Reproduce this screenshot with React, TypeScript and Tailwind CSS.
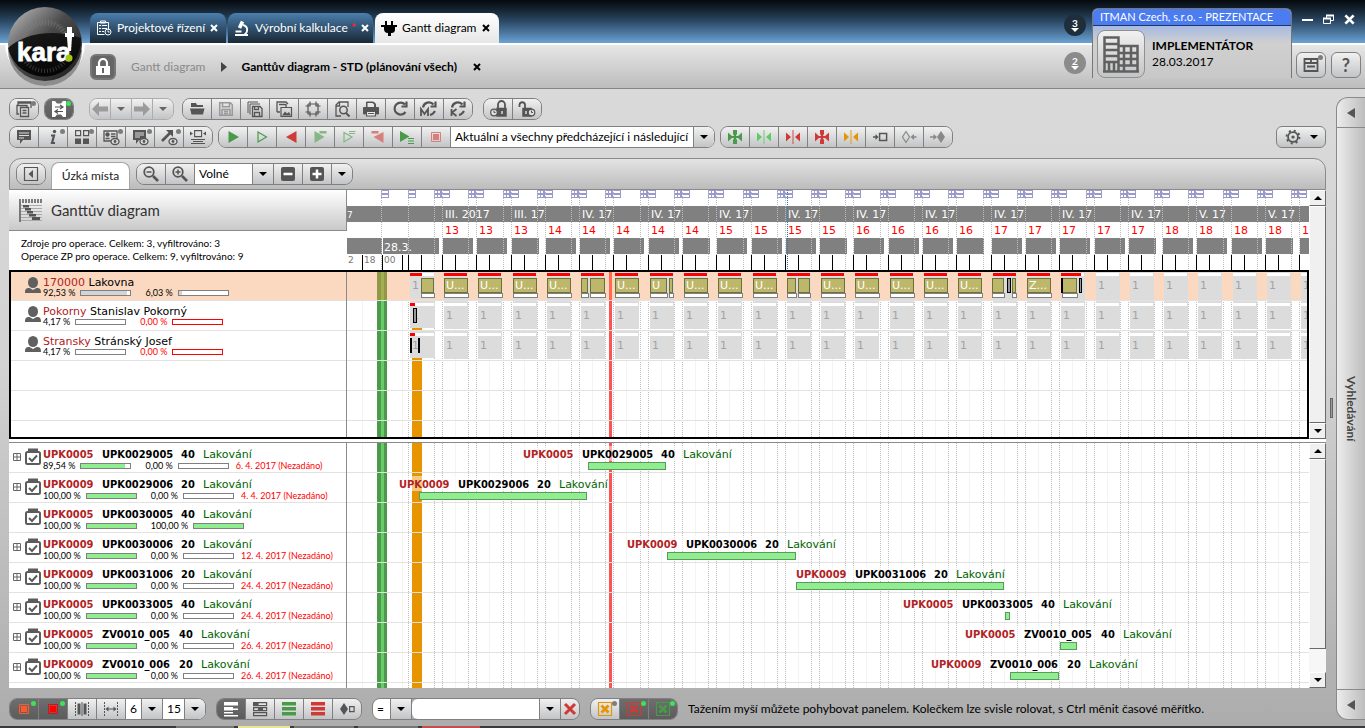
import React from 'react';

const DARK = '#555';
const GREEN = '#4b9a4b';
const RED = '#cf3a36';

/* ---------- icons ---------- */

interface IconProps {
  children: React.ReactNode;
  size?: number;
}

const Icon: React.FC<IconProps> = ({ children, size = 20 }) => (
  <svg width={size} height={size} viewBox="0 0 20 20" fill="none" stroke={DARK} strokeWidth="1.5" aria-hidden="true" className="shrink-0">
    {children}
  </svg>
);

const Caret = ({ color = '#000' }: { color?: string }) => (
  <svg width="8" height="4" viewBox="0 0 8 4" aria-hidden="true"><path d="M0 0h8L4 4z" fill={color} /></svg>
);

const Cross = ({ color = '#000', size = 8 }: { color?: string; size?: number }) => (
  <svg width={size} height={size} viewBox="0 0 8 8" aria-hidden="true"><path d="M1 1l6 6M7 1L1 7" stroke={color} strokeWidth="2" /></svg>
);

const eye = <><ellipse cx="14" cy="14.5" rx="4" ry="3" fill="#ddd" strokeWidth="1.3" /><circle cx="14" cy="14.5" r="1.4" fill={DARK} stroke="none" /></>;
const reload = <path d="M15 5.5A6 6 0 1 0 15.5 13M16.500 2.500v5h-5" strokeWidth="2.200" />;
const reloadHalf = <path d="M4 8.500A6 6 0 0 1 14.500 5.500M16.500 2.500v5h-5M11 16q3-.5 5-4" strokeWidth="2.200" />;
const clock = (x: number, y: number) => <><circle cx={x} cy={y} r="3.300" fill="#ddd" strokeWidth="1.200" /><path d={`M${x} ${y - 2}v2h1.500`} strokeWidth="1" /></>;

const icons = {
  windows: <Icon><path d="M4 6V3h13v6M4 4h13M3 8V6.500h10V8M3 7v8h2M6.500 8.500h8v9h-8zM8.500 11.500h4M8.500 14h4" strokeWidth="1.300" /></Icon>,
  fit: <Icon><path d="M3 2h3l2 2.500h4L14 2h3v16h-3l-2-2.500H8L6 18H3z" fill="#fff" stroke="none" /><path d="M6 8h7M11 6l3 2-3 2M14 12.500H7M9 10.500l-3 2 3 2" strokeWidth="1.200" /></Icon>,
  left: <Icon><path d="M2 10l7-7v4.500h9v5H9V17z" fill="#9b9b9b" stroke="none" /></Icon>,
  right: <Icon><path d="M18 10l-7-7v4.500H2v5h9V17z" fill="#9b9b9b" stroke="none" /></Icon>,
  folder: <Icon><path d="M4 8V4h5l1 2h6v2zM3 9.500h14.500l-1.500 6H4.500z" fill={DARK} stroke="none" /></Icon>,
  save: <Icon><path d="M3.700 3.700h10.600l2 2v10.600H3.700zM6.500 3.700v4h7v-4M6 16v-5.500h8V16M8 12.500h4M8 14.500h4" stroke="#999" /></Icon>,
  saveCopy: <Icon><path d="M3 14V3h10M5 15.500V5h10" strokeWidth="1" /><path d="M7.500 7.500h7.500l2 2v8H7.500zM9.500 7.500v3h4v-3M9.500 17v-3.500h5V17" strokeWidth="1.300" /></Icon>,
  saveImage: <Icon><path d="M3 13V3h9l2 2M5 5.500h7v3M3 13h3" strokeWidth="1.300" /><path d="M7 8.500h10.500v9H7z" strokeWidth="1.200" /><path d="M8 16.500l3-4 2 2 2-1.500 2 3.500z" fill={DARK} stroke="none" /></Icon>,
  chip: <Icon><path d="M7 5h6M7 15h6M5 7v6M15 7v6M7 2.500V7H2.500M13 2.500V7h4.500M7 17.500V13H2.500M13 17.500V13h4.500M5 5h2M13 5h2v2M5 5v2M5 13v2h2M15 13v2h-2" strokeWidth="1.200" /></Icon>,
  preview: <Icon><path d="M9 17H4V6l3-3h9v5M4 7h3.500V3" strokeWidth="1.300" /><circle cx="11.500" cy="11" r="3.700" /><path d="M14 14l3.500 3.500" strokeWidth="2" /></Icon>,
  print: <Icon><path d="M5.500 8V3h7l2 2v3M2.500 8.500h15V15h-2v-3h-11v3h-2z" fill={DARK} strokeWidth="1" /><path d="M6.500 4h5l1.500 1.500v2.500h-6.500z" fill="#e8e8e8" stroke="none" /><path d="M5.500 12.500h9v4.500h-9zM7 14.500h6" fill="#eee" strokeWidth="1.200" /></Icon>,
  reload: <Icon>{reload}</Icon>,
  reloadM: <Icon>{reloadHalf}<path d="M2 17v-7l3.500 5L9 10v7" strokeWidth="1.800" /></Icon>,
  reloadK: <Icon>{reloadHalf}<path d="M3.500 10v7M8.500 10l-4.500 3.500L8.500 17" strokeWidth="1.800" /></Icon>,
  lockClock: <Icon><path d="M9 9.500h9V17H9z" fill={DARK} /><path d="M10 9V5.500a3.500 3.500 0 0 1 7 0V9" strokeWidth="1.800" /><path d="M14 12v3" stroke="#ddd" />{clock(6, 13.5)}</Icon>,
  unlockClock: <Icon><path d="M6 9.500h8V17H6z" fill={DARK} /><path d="M8 9V5.500a2.800 2.800 0 0 0-5.500 0V8" strokeWidth="1.800" /><path d="M9 12v3" stroke="#ddd" />{clock(14.5, 13.5)}</Icon>,
  comment: <Icon><path d="M3 3h14v10H9l-3 4v-4H3z" fill={DARK} stroke="none" /><path d="M5 6h10M5 8.500h10M5 11h5" stroke="#ddd" strokeWidth="1.200" /></Icon>,
  info: <Icon><path d="M8 8.500h3l-2 7.500h3" strokeWidth="2.200" /><circle cx="11.500" cy="4.500" r="1.700" fill={DARK} stroke="none" /></Icon>,
  blocks: <Icon><path d="M3.600 3.600h5v5h-5zM11.600 3.600h5v5h-5z" strokeWidth="1.200" /><path d="M3 11.500h6V17H3zM11 11.500h6V17h-6z" fill={DARK} stroke="none" /></Icon>,
  cardEye: <Icon><path d="M3 4h13v10H3z" strokeWidth="1.300" /><circle cx="6.500" cy="7.500" r="1.500" fill={DARK} /><path d="M4.500 11.500h4M10 7h4.500M10 9.500h4.500" />{eye}</Icon>,
  commentEye: <Icon><path d="M3 3h13v10H9l-3 4v-4H3z" fill={DARK} stroke="none" /><path d="M5 6h9M5 8h9M5 10h5" stroke="#ddd" strokeWidth="1" />{eye}</Icon>,
  arrowEye: <Icon><path d="M3 14l8-8" strokeWidth="2.600" /><path d="M7 3h7v7z" fill={DARK} stroke="none" />{eye}</Icon>,
  align: <Icon><path d="M6.600 3.600h7v6h-7zM3 12.500h14M5 14.500h10M3 16.500h14" strokeWidth="1.100" /><path d="M2 4.500l3 2-3 2zM18 4.500l-3 2 3 2z" fill={DARK} stroke="none" /></Icon>,
  play: <Icon><path d="M5.500 4l10.500 6-10.500 6z" fill={GREEN} stroke="none" /></Icon>,
  playOutline: <Icon><path d="M6 5l8.500 5L6 15z" stroke={GREEN} strokeWidth="1.200" /></Icon>,
  back: <Icon><path d="M15.500 4L5 10l10.500 6z" fill={RED} stroke="none" /></Icon>,
  playSkip: <Icon><path d="M4.500 4l10 6-10 6zM9.500 4h7v2.500h-7z" fill="#86b686" stroke="none" /></Icon>,
  playSkipOutline: <Icon><path d="M5 5.500l8 4.500-8 5zM10 4.500h6.500M10 6.500h6" stroke="#86b686" strokeWidth="1.200" /></Icon>,
  backSkip: <Icon><path d="M15.500 5l-10 5 10 6zM3.500 4h7v2.500h-7z" fill="#d87f7d" stroke="none" /></Icon>,
  playList: <Icon><path d="M3 4l9.500 5.500L3 15z" fill={GREEN} stroke="none" /><path d="M11 11.500h6M11 14h6M11 16.500h6" stroke={GREEN} strokeWidth="1.200" /></Icon>,
  stop: <Icon><path d="M5.500 5.500h9v9h-9z" stroke="#d87f7d" strokeWidth="1" /><path d="M7 7h6v6H7z" fill="#d87f7d" stroke="none" /></Icon>,
  toBox: <Icon><path d="M3 10h4M9.600 6.600h7v7h-7z" /><path d="M5.500 7l3 3-3 3z" fill={DARK} stroke="none" /></Icon>,
  diamondOut: <Icon><path d="M7 4.500l3.500 5.500L7 15.500 3.500 10z" stroke="#888" strokeWidth="1.200" /><path d="M13 10h4.500" stroke="#888" /><path d="M15 7l-3.500 3 3.500 3z" fill="#888" stroke="none" /></Icon>,
  diamondIn: <Icon><path d="M13 4l4 6-4 6-4-6z" fill="#888" stroke="none" /><path d="M2 10h5" stroke="#888" /><path d="M5.500 7L9 10l-3.500 3z" fill="#888" stroke="none" /></Icon>,
  zoomOut: <Icon><circle cx="8" cy="8" r="4.800" strokeWidth="1.800" /><path d="M5.500 8h5" /><path d="M12 12l5 5" strokeWidth="2.600" /></Icon>,
  zoomIn: <Icon><circle cx="8" cy="8" r="4.800" strokeWidth="1.800" /><path d="M5.500 8h5M8 5.500v5" /><path d="M12 12l5 5" strokeWidth="2.600" /></Icon>,
  minus: <Icon><rect x="3" y="3" width="14" height="14" rx="2" fill={DARK} stroke="none" /><path d="M5.500 10h9" stroke="#fff" strokeWidth="2.500" /></Icon>,
  plus: <Icon><rect x="3" y="3" width="14" height="14" rx="2" fill={DARK} stroke="none" /><path d="M5.500 10h9M10 5.500v9" stroke="#fff" strokeWidth="2.500" /></Icon>,
  collapse: <Icon><path d="M3.500 3.500h13v13h-13z" strokeWidth="1.200" /><path d="M12 6v8l-4.500-4z" fill={DARK} stroke="none" /></Icon>,
  columns: <Icon><path d="M3.500 3v14M16.500 3v14" strokeDasharray="2 1" strokeWidth="1" /><path d="M5.500 4.500h3v11h-3zM11.500 4.500h3v11h-3z" fill={DARK} stroke="none" /><path d="M10 3v14" strokeWidth="1" /></Icon>,
  span: <Icon><path d="M3.500 3v14M16.500 3v14" strokeDasharray="2 1" strokeWidth="1" /><path d="M6 10h8" strokeWidth="1.200" /><path d="M4.500 10l3-2.500v5zM15.500 10l-3-2.500v5z" fill={DARK} stroke="none" /></Icon>,
  rowsWhite: <Icon><path d="M3 3h14v3.500H3zM3 8h9v3.500H3zM12 9.500h5V11h-5zM3 13h9v1.500H3zM3 16h14v1.500H3z" fill="#fff" stroke="none" /></Icon>,
  rowsDark: <Icon><path d="M3.600 3.600h13v3h-13zM3.600 8.600h13v3h-13zM3.600 13.600h13v3h-13z" strokeWidth="1.200" /><path d="M3.600 3.600h5v3h-5zM8 8.600h5v3H8z" fill={DARK} stroke="none" /></Icon>,
  rowsGreen: <Icon><path d="M3 3h14v3.500H3zM3 8h14v3.500H3zM3 13h14v3.500H3z" fill={GREEN} stroke="none" /></Icon>,
  rowsRed: <Icon><path d="M3 3h14v3.500H3zM3 8h14v3.500H3zM3 13h14v3.500H3z" fill={RED} stroke="none" /></Icon>,
  shapes: <Icon><path d="M7 4l4 6-4 6-4-6z" fill={DARK} stroke="none" /><path d="M12.600 7.600h4.500v5h-4.500z" strokeWidth="1.200" /></Icon>,
  cross: <Icon><path d="M5 5l10 10M15 5L5 15" stroke={RED} strokeWidth="3" /></Icon>,
};

const framed = (color: string) => (
  <Icon><path d="M5.500 5.500h9v9h-9z" stroke={color} strokeWidth="1" /><path d="M7 7h6v6H7z" fill={color} stroke="none" /></Icon>
);

const crossed = (color: string) => (
  <Icon><path d="M3.500 3.500h13v13h-13z" stroke={color} strokeWidth="1.200" /><path d="M6.500 6.500l7 7M13.500 6.500l-7 7" stroke={color} strokeWidth="2.800" /></Icon>
);

const meet = (color: string, thick = false) => (
  <Icon>
    <path d="M3 5.500L8 10l-5 4.500zM17 5.500L12 10l5 4.500z" fill={color} stroke="none" />
    {thick
      ? <path d="M8 3h4v4l-1 1.500v3l1 1.500v4H8v-4l1-1.500v-3L8 7zM7 9h6v2H7z" fill={color} stroke="none" />
      : <path d="M10 3v14" stroke={color} strokeOpacity="0.600" strokeWidth="1.500" />}
  </Icon>
);

/* ---------- controls ---------- */

const face = 'bg-linear-to-b from-[#f1f1f1] to-[#c3c4c6]';

const Group: React.FC<{ children: React.ReactNode; faded?: boolean }> = ({ children, faded }) => (
  <div className={`flex h-[22px] shrink-0 divide-x overflow-hidden rounded-lg border ${faded ? 'divide-[#adadad] border-[#adadad]' : 'divide-[#808080] border-[#808080]'}`}>
    {children}
  </div>
);

interface BtnProps {
  label: string;
  children: React.ReactNode;
  dot?: 'gray' | 'green';
  active?: boolean;
  narrow?: boolean;
}

const Btn: React.FC<BtnProps> = ({ label, children, dot, active, narrow }) => (
  <button
    type="button"
    aria-label={label}
    title={label}
    className={`relative flex h-full shrink-0 items-center justify-center overflow-hidden ${narrow ? 'w-[21px] last:w-5' : 'w-[29px] last:w-[28px]'} ${active ? 'bg-linear-to-b from-[#6e6e6e] to-[#5c5c5c]' : face}`}
  >
    {children}
    {dot && <span className={`absolute top-0.5 right-0.5 size-[5px] rounded-full ${dot === 'green' ? 'bg-[#3be35b]' : 'bg-[#7d7d7d]'}`}></span>}
  </button>
);

interface ComboProps {
  label: string;
  value: string;
  className: string;
}

const Combo: React.FC<ComboProps> = ({ label, value, className }) => (
  <div className={`relative h-full shrink-0 bg-white ${className}`}>
    <select aria-label={label} className="block h-5 w-full appearance-none bg-white pl-1 text-[12px] leading-5 outline-none">
      <option>{value}</option>
    </select>
    <span className={`pointer-events-none absolute inset-y-0 right-0 flex w-[21px] items-center justify-center border-l border-[#808080] ${face}`}>
      <Caret />
    </span>
  </div>
);

/* ---------- header ---------- */

const Logo = () => (
  <svg width="86" height="88" viewBox="0 0 86 88" className="absolute top-0 left-0 z-10" aria-label="karat">
    <defs>
      <linearGradient id="ball" x1="0" y1="0" x2="1" y2="1">
        <stop offset="0" stopColor="#c4c4c4" /><stop offset="0.450" stopColor="#4a4a4a" /><stop offset="1" stopColor="#1b1b1b" />
      </linearGradient>
      <linearGradient id="shade" x1="0" y1="0" x2="0" y2="1">
        <stop offset="0" stopColor="#111" /><stop offset="1" stopColor="#000" />
      </linearGradient>
    </defs>
    <path d="M5 43a40 40 0 0 0 80 0z" fill="#fff" />
    <path d="M8 50a37 36 0 0 0 74 0z" fill="#8d8d8d" />
    <circle cx="45" cy="44" r="37" fill="url(#ball)" />
    <circle cx="45" cy="46" r="23" fill="none" stroke="#888" strokeWidth="5" strokeDasharray="1 2" opacity="0.500" />
    <path d="M8 48c15-14 45-20 73-10a37 37 0 0 1-73 10z" fill="url(#shade)" opacity="0.900" />
    <circle cx="45" cy="46" r="25" fill="none" stroke="#777" strokeWidth="4" strokeDasharray="1 2" opacity="0.400" />
    <text x="17" y="61" fontSize="26" fontWeight="700" fontFamily="'Liberation Sans Narrow', 'Liberation Sans', sans-serif" fill="#fff" stroke="#fff" strokeWidth="0.800">kara</text>
    <path d="M67 27h5v6h2v4h-2l-1 14h-3l-1-14h-2v-4h2z" fill="#fff" />
    <circle cx="69" cy="58" r="3.500" fill="#a4c614" />
  </svg>
);

const tabIcons = [
  <svg key="p" width="16" height="16" viewBox="0 0 16 16" fill="none" stroke="#fff" aria-hidden="true"><path d="M1.500 2.500h11v7M1.500 2.500v12h7M4.500 1h5v2h-5zM3 5.500h2M6 5.500h5M3 8.500h2M6 8.500h5M3 11.500h2M6 11.500h2" /><circle cx="12" cy="12" r="3" /><path d="M12 10.500V12h1.500" /></svg>,
  <svg key="v" width="16" height="16" viewBox="0 0 16 16" fill="none" stroke="#fff" strokeWidth="1.800" className="shrink-0" aria-hidden="true"><path d="M1 15h13M1.500 11.500h6" /><path d="M8.500 1.500L5.500 8" strokeWidth="3.600" /><path d="M9 5c5 1 5.500 7 1.500 9.500" /></svg>,
  <svg key="g" width="16" height="16" viewBox="0 0 16 16" className="shrink-0" aria-hidden="true"><path d="M4 1h2v4h4V1h2v4h4v2h-2v2c0 3-1 4-4 4v3H7v-3C4 13 3 11 3 9V7H0V5h4z" fill="#000" /></svg>,
];

const tabs = [
  { title: 'Projektové řízení', width: 'w-[136px]', dirty: false, active: false },
  { title: 'Výrobní kalkulace', width: 'w-[145px]', dirty: true, active: false },
  { title: 'Gantt diagram', width: 'w-[124px]', dirty: false, active: true },
];

const Header = () => (
  <header className="relative shrink-0">
    <Logo />
    <div className="flex h-[43px] items-end gap-0.5 bg-linear-to-b from-[#05090d] via-[#2c4a66] to-[#6ba3d6] pl-[90px]">
      {tabs.map((tab, i) => (
        <div
          key={tab.title}
          className={`flex h-[30px] items-center gap-[5px] rounded-t-lg px-1.5 text-[12px] ${tab.width} ${tab.active ? 'bg-linear-to-b from-white to-[#e6e6e6] text-black' : 'bg-linear-to-b from-[#4a7fae] to-[#1a2936] text-white'}`}
        >
          {tabIcons[i]}
          <a href="#" className="whitespace-nowrap">{tab.title}</a>
          {tab.dirty && <span className="-ml-0.5 font-bold text-[#ff2020]">*</span>}
          <button type="button" aria-label={`Zavřít ${tab.title}`}><Cross color={tab.active ? '#000' : '#fff'} /></button>
        </div>
      ))}
    </div>
    <div className="flex h-[46px] items-center border-t-2 border-b border-t-white border-b-[#858585] bg-linear-to-b from-[#e6e6e6] to-[#bdbdbd] pl-[90px] text-[12px]">
      <button type="button" aria-label="Zámek" className="flex size-[26px] items-center justify-center rounded-md border-2 border-[#777] bg-[#666]">
        <svg width="16" height="18" viewBox="0 0 16 18" aria-hidden="true"><path d="M4 8V5a4 4 0 0 1 8 0v3" fill="none" stroke="#fff" strokeWidth="2.200" /><path d="M1 8h14v9H1z" fill="#fff" /><path d="M7 10h2v5H7z" fill="#666" /></svg>
      </button>
      <a href="#" className="ml-[15px] text-[#8a8a8a]">Gantt diagram</a>
      <svg width="6" height="10" viewBox="0 0 6 10" className="mx-[15px]" aria-hidden="true"><path d="M0 0l6 5-6 5z" fill="#444" /></svg>
      <span className="font-bold text-black">Ganttův diagram - STD (plánování všech)</span>
      <button type="button" aria-label="Zavřít diagram" className="ml-4"><Cross /></button>
    </div>

    <div className="absolute top-2 right-1 flex gap-1">
      <div className="mt-1.5 mr-0.5 flex flex-col gap-4">
        <button type="button" className="flex size-[22px] flex-col items-center justify-center rounded-full bg-[#1e2e3d] text-[10px] leading-[10px] font-bold text-white">3<Caret color="#fff" /></button>
        <button type="button" className="flex size-[22px] flex-col items-center justify-center rounded-full bg-[#8b8b8b] text-[10px] leading-[10px] font-bold text-white">2<Caret color="#fff" /></button>
      </div>
      <div className="w-[200px] rounded-t-md border border-b-0 border-[#777] bg-linear-to-b from-[#7ea2ee] via-[#d0d0d0] to-[#c8c8c8]">
        <div className="h-[17px] overflow-hidden rounded-t-md border-b border-[#1e3566] bg-[#4b7cf0] pl-[7px] text-[11px] leading-4 whitespace-nowrap text-white">ITMAN Czech, s.r.o. - PREZENTACE</div>
        <div className="flex items-center gap-[7px] px-1 pt-1">
          <button type="button" aria-label="Firma" className={`flex size-12 items-center justify-center rounded-lg border border-[#909090] ${face}`}>
            <svg width="38" height="38" viewBox="0 0 38 38" fill="none" stroke="#606060" aria-hidden="true">
              <path d="M2.500 36V2.500h14V36M2.500 9h14M2.500 15h14M2.500 21h14M2.500 27h14M16 11h19.500V36M1 36.500h36M7 36v-9M12 36v-9M22 11v25M29 11v20M16 18h19M16 24h19M16 30.500h19" strokeWidth="2.500" />
            </svg>
          </button>
          <p className="text-[12px] leading-4 text-black">
            <strong>IMPLEMENTÁTOR</strong><br />28.03.2017
          </p>
        </div>
      </div>
      <div className="flex w-[65px] flex-col justify-between">
        <div className="flex items-center justify-between px-1.5 pt-1.5">
          <button type="button" aria-label="Minimalizovat"><svg width="11" height="11" viewBox="0 0 11 11"><path d="M0 5h11v2H0z" fill="#fff" /></svg></button>
          <button type="button" aria-label="Obnovit"><svg width="11" height="11" viewBox="0 0 11 11" fill="none" stroke="#fff"><path d="M3.500 4V1.500h7v5H8M.5 4.500h7v5h-7z" /><path d="M3 1.500h8M0 4.500h8" strokeWidth="2" /></svg></button>
          <button type="button" aria-label="Zavřít"><Cross color="#fff" size={11} /></button>
        </div>
        <div className="flex gap-[5px]">
          <button type="button" aria-label="Okna" className={`relative flex h-[26px] w-[30px] items-center justify-center rounded-md border border-[#808080] ${face}`}>
            <Icon><path d="M3.500 4h13v12h-13zM3 8h14M10 4v4M6 11.500h8" strokeWidth="1.800" /></Icon>
            <span className="absolute top-0.5 right-0.5 size-[5px] rounded-full bg-[#7d7d7d]"></span>
          </button>
          <button type="button" aria-label="Nápověda" className={`h-[26px] w-[30px] rounded-md border border-[#808080] text-[18px] leading-6 font-bold text-[#555] ${face}`}>?</button>
        </div>
      </div>
    </div>
  </header>
);

/* ---------- toolbars ---------- */

const Toolbars = () => (
  <div className="flex flex-col gap-1.5 pt-[9px]">
    <div className="flex gap-[10px]">
      <div className="mr-[5px] flex gap-[5px]">
        <Group><Btn label="Okna" dot="gray">{icons.windows}</Btn></Group>
        <Group><Btn label="Přizpůsobit" dot="green" active>{icons.fit}</Btn></Group>
      </div>
      <Group faded>
        <Btn label="Zpět" narrow>{icons.left}</Btn>
        <Btn label="Historie zpět" narrow><Caret color="#666" /></Btn>
        <Btn label="Vpřed" narrow>{icons.right}</Btn>
        <Btn label="Historie vpřed" narrow><Caret color="#666" /></Btn>
      </Group>
      <div className="-ml-0.5 flex gap-[10px]">
        <Group>
          <Btn label="Otevřít">{icons.folder}</Btn>
          <Btn label="Uložit">{icons.save}</Btn>
          <Btn label="Uložit kopii">{icons.saveCopy}</Btn>
          <Btn label="Uložit obrázek">{icons.saveImage}</Btn>
          <Btn label="Výběr">{icons.chip}</Btn>
          <Btn label="Náhled">{icons.preview}</Btn>
          <Btn label="Tisk">{icons.print}</Btn>
          <Btn label="Obnovit">{icons.reload}</Btn>
          <Btn label="Obnovit M">{icons.reloadM}</Btn>
          <Btn label="Obnovit K">{icons.reloadK}</Btn>
        </Group>
        <Group>
          <Btn label="Zamknout">{icons.lockClock}</Btn>
          <Btn label="Odemknout">{icons.unlockClock}</Btn>
        </Group>
      </div>
    </div>
    <div className="flex gap-[5px]">
      <Group>
        <Btn label="Komentář">{icons.comment}</Btn>
        <Btn label="Informace" dot="gray">{icons.info}</Btn>
        <Btn label="Bloky" dot="gray">{icons.blocks}</Btn>
        <Btn label="Karta" dot="gray">{icons.cardEye}</Btn>
        <Btn label="Poznámky" dot="gray">{icons.commentEye}</Btn>
        <Btn label="Vazby" dot="gray">{icons.arrowEye}</Btn>
        <Btn label="Zarovnat">{icons.align}</Btn>
      </Group>
      <Group>
        <Btn label="Spustit">{icons.play}</Btn>
        <Btn label="Simulovat">{icons.playOutline}</Btn>
        <Btn label="Zpětně">{icons.back}</Btn>
        <Btn label="Spustit od">{icons.playSkip}</Btn>
        <Btn label="Simulovat od">{icons.playSkipOutline}</Btn>
        <Btn label="Zpětně od">{icons.backSkip}</Btn>
        <Btn label="Spustit seznam">{icons.playList}</Btn>
        <Btn label="Zastavit">{icons.stop}</Btn>
        <Combo label="Rozsah" value="Aktuální a všechny předcházející i následující" className="w-[263px]" />
      </Group>
      <Group>
        <Btn label="Posun zelený">{meet(GREEN, true)}</Btn>
        <Btn label="Posun světlý">{meet('#5fcb62')}</Btn>
        <Btn label="Posun červený">{meet(RED)}</Btn>
        <Btn label="Posun pevný">{meet(RED, true)}</Btn>
        <Btn label="Posun oranžový">{meet('#e69500')}</Btn>
        <Btn label="Do bloku">{icons.toBox}</Btn>
        <Btn label="Z milníku">{icons.diamondOut}</Btn>
        <Btn label="Do milníku">{icons.diamondIn}</Btn>
      </Group>
      <button type="button" aria-label="Nastavení" className={`ml-auto flex h-[22px] w-[50px] items-center justify-center gap-2 rounded-md border border-[#808080] ${face}`}>
        <Icon size={18}>
          <circle cx="10" cy="10" r="5.500" strokeWidth="2" /><circle cx="10" cy="10" r="1.800" fill={DARK} stroke="none" />
          <circle cx="10" cy="10" r="7.200" strokeWidth="2" strokeDasharray="2.300 3.350" />
        </Icon>
        <Caret />
      </button>
    </div>
  </div>
);

/* ---------- timeline ---------- */

const DAYS = Array.from({ length: 26 }, (_, k) => k);
const dayX = (k: number) => Math.floor(95.45 + 34.295 * k);

// last working day of each calendar week is drawn shorter
const shortDays = [2, 7, 11, 15, 20, 24];
const weekOf = (k: number) => (k < 3 ? 13 : k < 8 ? 14 : k < 12 ? 15 : k < 16 ? 16 : k < 21 ? 17 : k < 25 ? 18 : 1);
const monthOf = (k: number) => (k === 0 ? 'III. 2017' : k === 2 ? 'III. 17' : k < 22 ? 'IV. 17' : 'V. 17');

const VERDANA = "'DejaVu Sans', sans-serif";

interface BoxProps {
  x: number;
  y: number;
  w: number;
  h: number;
  stroke: string;
  fill: string;
}

const Box: React.FC<BoxProps> = ({ x, y, w, h, stroke, fill }) => (
  <>
    <rect x={x} y={y} width={w} height={h} fill={stroke} />
    <rect x={x + 1} y={y + 1} width={w - 2} height={h - 2} fill={fill} />
  </>
);

const Dotted = ({ x, fill = 'url(#dots)' }: { x: number; fill?: string }) => (
  <rect x={x} y="0" width="1" height="100%" fill={fill} />
);

const DotPatterns = () => (
  <defs>
    <pattern id="dots" width="1" height="2" patternUnits="userSpaceOnUse"><rect width="1" height="1" fill="#bdbdbd" /></pattern>
    <pattern id="dotsBlue" width="1" height="2" patternUnits="userSpaceOnUse"><rect width="1" height="1" fill="#2a7ab8" /></pattern>
  </defs>
);

const TimeScale = () => (
  <svg width="100%" height="80" shapeRendering="crispEdges" fontFamily={VERDANA} className="block">
    <DotPatterns />
    <rect x="0" y="16" width="100%" height="16" fill="#808080" />
    <rect x="0" y="48" width="92" height="16" fill="#808080" />
    <rect x="35" y="48" width="1" height="16" fill="#fff" />
    {[34, 61].map((x) => (
      <g key={x}>
        <Box x={x} y={0} w={8} h={8} stroke="#9999cc" fill="#fff" />
        <rect x={x} y="3" width="8" height="2" fill="#9999cc" />
        <Dotted x={x} />
      </g>
    ))}
    {[15, 35, 55, 61, 74].map((x) => <rect key={x} x={x} y="65" width="1" height="15" fill="#000" />)}
    {DAYS.map((k) => {
      const x = dayX(k);
      return (
        <g key={k}>
          <rect x={x + 1} y="48" width={shortDays.includes(k) ? 27 : 30} height="16" fill="#808080" />
          <Box x={x - 8} y={0} w={16} h={8} stroke="#9999cc" fill="#fff" />
          <rect x={x - 8} y="3" width="16" height="2" fill="#9999cc" />
          <rect x={x - 5} y="0" width="1" height="8" fill="#9999cc" />
          <rect x={x - 2} y="0" width="2" height="8" fill="#9999cc" />
          <Dotted x={x - 8} />
          <Dotted x={x} />
          <rect x={x} y="65" width="1" height="15" fill="#000" />
          <rect x={x + 13} y="65" width="1" height="15" fill="#000" />
          <text x={x + 3} y="44" fontSize="11" fill="#f00">{weekOf(k)}</text>
          {k % 2 === 0 && <text x={x + 3} y="28" fontSize="11" fill="#fff">{monthOf(k)}</text>}
        </g>
      );
    })}
    <Dotted x={440} fill="url(#dotsBlue)" />
    <text x="0" y="28" fontSize="9" fill="#fff">7</text>
    <text x="37" y="61" fontSize="11" fill="#fff">28.3.</text>
    <g fontSize="9" fill="#777">
      <text x="1" y="73">2</text>
      <text x="17" y="73">18</text>
      <text x="37" y="73">00</text>
    </g>
  </svg>
);

const Grid = ({ rows, first }: { rows: number; first: number }) => (
  <>
    <DotPatterns />
    {[15, 55, 74].map((x) => <rect key={x} x={x} y="0" width="1" height="100%" fill="#f3f3f3" />)}
    {DAYS.map((k) => <rect key={k} x={dayX(k) + 13} y="0" width="1" height="100%" fill="#f3f3f3" />)}
    <rect x="30" y="0" width="10" height="100%" fill="#4e984e" />
    <rect x="34" y="0" width="3" height="100%" fill="#66cc66" />
    <rect x="65" y="0" width="10" height="100%" fill="#e69500" />
    <Dotted x={61} />
    {DAYS.map((k) => (
      <g key={k}><Dotted x={dayX(k) - 8} /><Dotted x={dayX(k)} /></g>
    ))}
    <rect x="262" y="0" width="3" height="100%" fill="#ff5252" />
    {Array.from({ length: rows }, (_, i) => (
      <rect key={i} x="0" y={first + i * 30} width="100%" height="1" fill="#e2e2e2" />
    ))}
  </>
);

// occupied blocks of the paint shop, offset and width inside the day
const blocks: Record<number, { dx: number; w: number; text?: string }[]> = {
  4: [{ dx: 2, w: 7 }, { dx: 11, w: 15 }],
  6: [{ dx: 2, w: 17, text: 'U' }, { dx: 21, w: 4 }],
  10: [{ dx: 2, w: 9 }, { dx: 13, w: 12 }],
  16: [{ dx: 1, w: 12 }, { dx: 21, w: 4 }],
  17: [{ dx: 2, w: 24, text: 'Z...' }],
  18: [{ dx: 3, w: 15 }],
};

const rowTops = [0, 29, 59];

const ResourceChart = () => (
  <svg width="100%" height="100%" shapeRendering="crispEdges" fontFamily={VERDANA} fontSize="11" className="block">
    <Grid rows={5} first={28} />
    <rect x="0" y="0" width="100%" height="28" fill="#fbd9c0" />
    <rect x="30" y="0" width="10" height="28" fill="#929748" />
    <rect x="34" y="0" width="3" height="28" fill="#a2b052" />
    <rect x="262" y="0" width="3" height="28" fill="#ff6a50" />
    {rowTops.map((y, row) => (
      <g key={y}>
        <rect x="63" y={y} width="25" height="27" fill="#dcdcdc" />
        <rect x="63" y={row === 0 ? 1 : y + 2} width="24" height="3" fill="#fff" />
        <rect x="63" y={row === 0 ? 1 : y + 2} width={row === 0 ? 12 : 5} height="3" fill="#f00" />
        <text x="65" y={row === 0 ? 17 : y + 18} fill="#a3a3a3">1</text>
      </g>
    ))}
    <Box x={74} y={6} w={13} h={15} stroke="#6f6f38" fill="#bdb76b" />
    <Box x={74} y={21} w={14} h={5} stroke="#808080" fill="#fff" />
    <Box x={66} y={36} w={4} h={15} stroke="#000" fill="#999" />
    <rect x="63" y="66" width="2" height="15" fill="#000" />
    <rect x="71" y="66" width="2" height="15" fill="#000" />
    {DAYS.map((k) => {
      const x = dayX(k);
      return (
        <g key={k}>
          {rowTops.map((y, row) => (
            <g key={y}>
              <rect x={x + 2} y={y} width="24" height="28" fill="#dcdcdc" />
              <rect x={x + 2} y={row === 0 ? 1 : y + 2} width="23" height="3" fill="#fff" />
              {(row > 0 || k > 18) && <text x={x + 4} y={row === 0 ? 17 : y + 18} fill="#a3a3a3">1</text>}
            </g>
          ))}
          {k < 19 && <rect x={x + 2} y="1" width={k === 18 ? 20 : 23} height="3" fill="#f00" />}
          {k < 19 && (blocks[k] ?? [{ dx: 2, w: 24, text: 'U...' }]).map((b) => (
            <g key={b.dx}>
              <Box x={x + b.dx} y={6} w={b.w} h={15} stroke="#6f6f38" fill="#bdb76b" />
              <Box x={x + b.dx} y={21} w={b.w + 1} h={5} stroke="#808080" fill="#fff" />
              {b.text && <text x={x + b.dx + 2} y="17" fill="#fff">{b.text}</text>}
            </g>
          ))}
        </g>
      );
    })}
    <Box x={dayX(16) + 16} y={6} w={4} h={15} stroke="#000" fill="#999" />
    <rect x={dayX(18) + 2} y="6" width="2" height="15" fill="#000" />
    <Box x={dayX(18) + 20} y={6} w={3} h={15} stroke="#000" fill="#999" />
  </svg>
);

interface Operation {
  code: string;
  order: string;
  num: string;
  done: string;
  fill: number;
  date?: string;
  label?: number;
  bar?: [number, number];
}

const operations: Operation[] = [
  { code: 'UPK0005', order: 'UPK0029005', num: '40', done: '89,54 %', fill: 89, date: '6. 4. 2017 (Nezadáno)', label: 176, bar: [241, 78] },
  { code: 'UPK0009', order: 'UPK0029006', num: '20', done: '100,00 %', fill: 100, date: '4. 4. 2017 (Nezadáno)', label: 52, bar: [72, 168] },
  { code: 'UPK0005', order: 'UPK0030005', num: '40', done: '100,00 %', fill: 100 },
  { code: 'UPK0009', order: 'UPK0030006', num: '20', done: '100,00 %', fill: 100, date: '12. 4. 2017 (Nezadáno)', label: 280, bar: [320, 129] },
  { code: 'UPK0009', order: 'UPK0031006', num: '20', done: '100,00 %', fill: 100, date: '24. 4. 2017 (Nezadáno)', label: 449, bar: [449, 208] },
  { code: 'UPK0005', order: 'UPK0033005', num: '40', done: '100,00 %', fill: 100, date: '24. 4. 2017 (Nezadáno)', label: 556, bar: [658, 5] },
  { code: 'UPK0005', order: 'ZV0010_005', num: '40', done: '100,00 %', fill: 100, date: '26. 4. 2017 (Nezadáno)', label: 618, bar: [713, 17] },
  { code: 'UPK0009', order: 'ZV0010_006', num: '20', done: '100,00 %', fill: 100, date: '26. 4. 2017 (Nezadáno)', label: 584, bar: [663, 49] },
];

const OperationChart = () => (
  <svg width="100%" height="100%" shapeRendering="crispEdges" className="block">
    <Grid rows={8} first={29} />
    {operations.map((op, i) => {
      if (op.label === undefined || !op.bar) return null;
      const y = i * 30;
      const numX = op.label + (op.order.startsWith('ZV') ? 136 : 138);
      return (
        <g key={op.order}>
          <rect x={op.label} y={y + 3} width="208" height="15" fill="#fff" fillOpacity="0.500" />
          <g fontSize="11" fontWeight="700" fontFamily="'DejaVu Sans Condensed', 'DejaVu Sans', sans-serif">
            <text x={op.label} y={y + 15} fill="#b22222">{op.code}</text>
            <text x={op.label + 59} y={y + 15} fill="#000">{op.order}</text>
            <text x={numX} y={y + 15} fill="#000">{op.num}</text>
          </g>
          <text x={numX + 22} y={y + 15} fontSize="11" fontFamily={VERDANA} fill="#006400">Lakování</text>
          <Box x={op.bar[0]} y={y + 19} w={op.bar[1]} h={8} stroke="#5a9a5a" fill="#90ee90" />
        </g>
      );
    })}
  </svg>
);

/* ---------- lists ---------- */

const Meter = ({ value, color = 'bg-[#90ee90]', red }: { value: number; color?: string; red?: boolean }) => (
  <span className={`block h-1.5 w-[51px] border bg-white ${red ? 'border-[#f00]' : 'border-[#808080]'}`}>
    <span className={`block h-full ${color}`} style={{ width: `${value}%` }}></span>
  </span>
);

const resources = [
  { code: '170000', name: 'Lakovna', a: '92,53 %', av: 92, b: '6,03 %', bv: 6, selected: true },
  { code: 'Pokorny', name: 'Stanislav Pokorný', a: '4,17 %', av: 0, b: '0,00 %', bv: 0, selected: false },
  { code: 'Stransky', name: 'Stránský Josef', a: '4,17 %', av: 0, b: '0,00 %', bv: 0, selected: false },
];

const ResourceList = () => (
  <ul>
    {resources.map((r) => (
      <li key={r.code} className={`flex items-start gap-0.5 border-b border-[#e2e2e2] pl-3.5 ${r.selected ? 'h-[29px] bg-[#fbd9c0]' : 'h-[30px]'}`}>
        <svg width="16" height="16" viewBox="0 0 16 16" className="mt-[5px] shrink-0" aria-hidden="true"><ellipse cx="8" cy="5.500" rx="5" ry="5.500" fill="#606060" /><path d="M0 16c0-4 1-5 4.500-5L8 13l3.500-2c3.500 0 4.500 1 4.500 5z" fill="#606060" /></svg>
        <div>
          <p className="h-[15px] pt-1 font-['DejaVu_Sans'] text-[11px] leading-[13px] whitespace-pre text-black">
            <span className="text-[#b22222]">{r.code}</span> {r.name}
          </p>
          <p className="flex h-3 items-center gap-[5px] text-[9px] leading-3 text-black">
            {r.a}<Meter value={r.av} color="bg-[#d4d4d4]" />
            <span className={`ml-[9px] ${r.selected ? '' : 'text-[#f00]'}`}>{r.b}</span><Meter value={r.bv} color="bg-[#d4d4d4]" red={!r.selected} />
          </p>
        </div>
      </li>
    ))}
    <li className="h-[30px] border-b border-[#e2e2e2]"></li>
    <li className="h-[30px] border-b border-[#e2e2e2]"></li>
  </ul>
);

const OperationList = () => (
  <ul>
    {operations.map((op) => (
      <li key={op.order} className="flex h-[30px] items-start gap-0.5 border-b border-[#e2e2e2] pl-1">
        <span className="mt-[10px] flex h-2 w-2 shrink-0">
          {op.date && (
            <button type="button" aria-label={`Rozbalit ${op.order}`} className="block">
              <svg width="8" height="8" viewBox="0 0 8 8" fill="none" stroke="#666" aria-hidden="true"><path d="M.5.5h7v7h-7zM4 0v8M0 4h8" /></svg>
            </button>
          )}
        </span>
        <svg width="16" height="17" viewBox="0 0 16 17" className="mt-[5px] ml-0.5 shrink-0" fill="none" stroke="#5c5c5c" strokeWidth="2" aria-hidden="true">
          <rect x="1" y="4" width="14" height="12" rx="1.500" /><path d="M4 1.500h8V4H4z" fill="#5c5c5c" /><path d="M4 10l3 3 5-5.500" />
        </svg>
        <div className="whitespace-nowrap">
          <p className="flex h-[17px] pt-[5px] font-['DejaVu_Sans_Condensed'] text-[11px] leading-[14px] font-bold text-black">
            <span className="w-[59px] text-[#b22222]">{op.code}</span>
            <span className={op.order.startsWith('ZV') ? 'w-[77px]' : 'w-[79px]'}>{op.order}</span>
            <span className="w-[22px]">{op.num}</span>
            <span className="font-['DejaVu_Sans'] font-normal text-[#006400]">Lakování</span>
          </p>
          <p className="flex h-3 items-center gap-[5px] text-[9px] leading-3 text-black">
            {op.done}<Meter value={op.fill} />
            <span className="ml-[9px]">{op.date ? '0,00 %' : '100,00 %'}</span><Meter value={op.date ? 0 : 100} />
            {op.date && <span className="ml-0.5 text-[#f00]">{op.date}</span>}
          </p>
        </div>
      </li>
    ))}
  </ul>
);

const ScrollBar = ({ short }: { short?: boolean }) => {
  const raised = 'border border-t-white border-l-white border-r-[#696969] border-b-[#696969] bg-[#f0f0f0]';
  return (
    <div className="flex w-[17px] shrink-0 flex-col bg-[#f7f7f7]">
      <button type="button" aria-label="Nahoru" className={`flex h-4 items-center justify-center ${raised}`}><span className="rotate-180"><Caret /></span></button>
      <div className={`flex-1 ${raised}`}></div>
      {short && <div className="h-[23px]"></div>}
      <button type="button" aria-label="Dolů" className={`flex h-4 items-center justify-center ${raised}`}><Caret /></button>
    </div>
  );
};

/* ---------- panel ---------- */

const PanelBar = () => (
  <div className="flex h-8 shrink-0 items-center gap-[5px] rounded-t-xl border border-[#8a8a8a] bg-linear-to-b from-[#e4e4e4] to-[#bcbcbc] pl-1.5">
    <Group><Btn label="Skrýt panel">{icons.collapse}</Btn></Group>
    <a href="#" className="mr-px flex h-[27px] w-[79px] items-center justify-center self-end rounded-t-lg border border-b-0 border-[#a5a5a5] bg-white text-[12px] text-[#222]">Úzká místa</a>
    <Group>
      <Btn label="Oddálit">{icons.zoomOut}</Btn>
      <Btn label="Přiblížit">{icons.zoomIn}</Btn>
      <Combo label="Měřítko" value="Volné" className="w-[79px]" />
      <Btn label="Ubrat">{icons.minus}</Btn>
      <Btn label="Přidat">{icons.plus}</Btn>
      <Btn label="Další" narrow><Caret /></Btn>
    </Group>
  </div>
);

const GanttPanel = () => (
  <section className="flex min-h-0 flex-1 flex-col bg-white">
    <div className="flex shrink-0">
      <div className="flex min-w-0 flex-1 flex-col">
        <div className="flex">
          <div className="w-[338px] shrink-0">
            <div className="flex h-[41px] items-center gap-[9px] border-r border-b border-[#8a8a8a] bg-linear-to-b from-white to-[#c9c9c9] pl-2.5">
              <svg width="23" height="23" viewBox="0 0 23 23" aria-hidden="true">
                <path d="M0 1h23M0 3h23" stroke="#555" strokeWidth="1.500" strokeDasharray="2 1" />
                <path d="M0 6.500h23M0 9.500h23M0 12.500h23M0 15.500h23M0 18.500h23M0 21.500h23" stroke="#aaa" />
                <path d="M0 4h2v19H0z" fill="#777" />
                <path d="M4 6h6v2.500H4zM6 9h6v2.500H6zM8 12h6v2.500H8zM10 15h7v2.500h-7zM13 18h8v3h-8z" fill="#555" />
              </svg>
              <h1 className="text-[15px] text-[#333]">Ganttův diagram</h1>
            </div>
            <p className="pt-1.5 pl-3 text-[10px] leading-[13px] text-black">
              Zdroje pro operace. Celkem: 3, vyfiltrováno: 3<br />
              Operace ZP pro operace. Celkem: 9, vyfiltrováno: 9
            </p>
          </div>
          <div className="min-w-0 flex-1 overflow-hidden"><TimeScale /></div>
        </div>
        <div className="flex h-[169px] overflow-hidden border-2 border-black">
          <div className="w-[336px] shrink-0 border-r border-[#8a8a8a]"><ResourceList /></div>
          <div className="min-w-0 flex-1"><ResourceChart /></div>
        </div>
      </div>
      <ScrollBar />
    </div>
    <div className="mt-[3px] flex min-h-0 flex-1 border-t border-[#8a8a8a]">
      <div className="w-[338px] shrink-0 overflow-hidden border-r border-[#8a8a8a]"><OperationList /></div>
      <div className="min-w-0 flex-1"><OperationChart /></div>
      <ScrollBar short />
    </div>
  </section>
);

const BottomBar = () => (
  <footer className="flex h-[38px] shrink-0 items-center gap-[10px] pt-1 text-[12px] text-black">
    <Group>
      <Btn label="Oranžové" dot="green" active>{framed('#ff5a2a')}</Btn>
      <Btn label="Červené" dot="green" active>{framed('#f00')}</Btn>
      <Btn label="Sloupce">{icons.columns}</Btn>
      <Btn label="Rozpětí">{icons.span}</Btn>
      <Combo label="Počet" value="6" className="w-[37px]" />
      <Combo label="Interval" value="15" className="w-[42px]" />
    </Group>
    <Group>
      <Btn label="Řádky" active>{icons.rowsWhite}</Btn>
      <Btn label="Dva řádky">{icons.rowsDark}</Btn>
      <Btn label="Zelené řádky">{icons.rowsGreen}</Btn>
      <Btn label="Červené řádky">{icons.rowsRed}</Btn>
      <Btn label="Tvary">{icons.shapes}</Btn>
    </Group>
    <Group>
      <Combo label="Operátor" value="=" className="w-[39px]" />
      <input type="text" aria-label="Filtr" className="h-full w-[128px] rounded-l-md bg-white px-1 outline-none" />
      <Btn label="Historie filtru" narrow><Caret /></Btn>
      <button type="button" aria-label="Zrušit filtr" className={`flex w-[18px] items-center justify-center ${face}`}>{icons.cross}</button>
    </Group>
    <Group>
      <Btn label="Zrušit oranžové" dot="gray">{crossed('#e69500')}</Btn>
      <Btn label="Zrušit červené" dot="green" active>{crossed(RED)}</Btn>
      <Btn label="Zrušit zelené" dot="green" active>{crossed(GREEN)}</Btn>
    </Group>
    <p className="whitespace-nowrap">Tažením myší můžete pohybovat panelem. Kolečkem lze svisle rolovat, s Ctrl měnit časové měřítko.</p>
  </footer>
);

const SearchPanel = () => (
  <aside className="mt-2 mb-1.5 flex w-[29px] shrink-0 flex-col items-center rounded-l-xl border border-r-0 border-[#8a8a8a] bg-linear-to-r from-[#ececec] to-[#bdbdbd]">
    <button type="button" aria-label="Rozbalit vyhledávání" className="flex h-[30px] w-full items-center justify-center border-b border-[#8a8a8a]">
      <svg width="8" height="10" viewBox="0 0 8 10" aria-hidden="true"><path d="M8 0v10L0 5z" fill="#555" /></svg>
    </button>
    <div className="flex flex-1 items-center">
      <span className="text-[12px] font-bold text-[#444] [writing-mode:vertical-rl]">Vyhledávání</span>
    </div>
    <button type="button" aria-label="Rozbalit" className="flex h-[30px] w-full items-center justify-center border-t border-[#8a8a8a]">
      <svg width="8" height="10" viewBox="0 0 8 10" aria-hidden="true"><path d="M8 0v10L0 5z" fill="#555" /></svg>
    </button>
  </aside>
);

export default function App() {
  return (
    <div className="flex h-screen flex-col overflow-hidden bg-linear-to-b from-[#dcdcdc] via-[#d2d2d2] to-[#acacac] font-['Lato','Open_Sans',sans-serif]">
      <Header />
      <div className="flex min-h-0 flex-1">
        <main className="flex min-w-0 flex-1 flex-col pl-[9px]">
          <Toolbars />
          <div className="mt-[10px] flex min-h-0 flex-1 flex-col">
            <PanelBar />
            <GanttPanel />
          </div>
          <BottomBar />
        </main>
        <div className="flex w-[10px] shrink-0 items-center justify-center">
          <span className="h-5 w-[3px] border border-[#666] bg-[#999]"></span>
        </div>
        <SearchPanel />
      </div>
      <div className="flex h-0.5 shrink-0 gap-1 bg-[#3a3a3c] pl-44">
        <span className="w-[58px] bg-[#777]"></span>
        <span className="w-[52px] bg-[#e6e69a]"></span>
        <span className="w-[60px] bg-[#777]"></span>
        <span className="w-[60px] bg-[#777]"></span>
        <span className="w-[58px] bg-[#c05050]"></span>
      </div>
    </div>
  );
}
